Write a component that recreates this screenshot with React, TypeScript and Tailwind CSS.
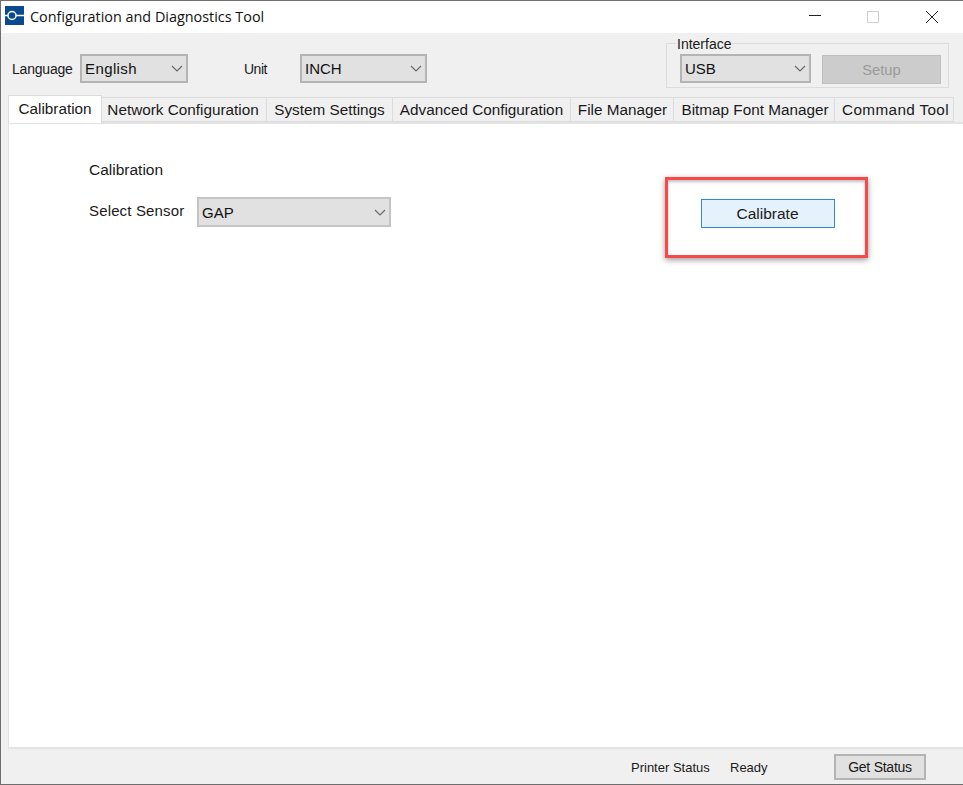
import React from "react";

const Chevron = () => (
  <svg width="12" height="7" viewBox="0 0 12 7" fill="none" className="shrink-0">
    <path d="M1 1 L6 6 L11 1" stroke="#666666" strokeWidth="1.1" />
  </svg>
);

function Select({ value, className, textClass = "" }: { value: string; className: string; textClass?: string }) {
  return (
    <div
      className={`flex h-[29px] items-center justify-between border-2 bg-[#e1e1e1] pl-[3px] pr-[2px] text-[15px] text-[#111111] ${className}`}
    >
      <span className={`pt-[2px] ${textClass}`}>{value}</span>
      <span className="mr-[1px]">
        <Chevron />
      </span>
    </div>
  );
}

const tabs: [string, string][] = [
  ["Network Configuration", "w-[165px] pr-[2px]"],
  ["System Settings", "w-[126px]"],
  ["Advanced Configuration", "w-[178px]"],
  ["File Manager", "w-[103px] pl-[1px]"],
  ["Bitmap Font Manager", "w-[161px] pl-[2px]"],
  ["Command Tool", "w-[119px] pl-[3px] tracking-[0.35px]"],
];

export default function App() {
  return (
    <div className="flex h-[785px] w-[963px] flex-col overflow-hidden border border-r-0 border-[#6e6e6e] bg-[#f0f0f0] font-['Liberation_Sans',sans-serif] text-[14px] text-[#1a1a1a]">
      {/* title bar */}
      <div className="flex h-[32px] shrink-0 items-center bg-white">
        <svg width="19" height="19" viewBox="0 0 19 19" className="mb-[3px] ml-[4px] shrink-0">
          <rect width="19" height="19" fill="#0b4a8f" />
          <circle cx="7" cy="9.5" r="4" fill="none" stroke="white" strokeWidth="1.5" />
          <path d="M0 9.5 H3 M11 9.5 H19" stroke="white" strokeWidth="1.5" />
        </svg>
        <span className="ml-[6px] font-['Open_Sans',sans-serif] text-[14.4px] text-[#111111]">
          Configuration and Diagnostics Tool
        </span>
        <div className="ml-auto flex items-center">
          <span className="mb-[3px] h-px w-[12px] bg-[#222222]" />
          <span className="ml-[46px] h-[12px] w-[12px] border border-[#cfcfcf]" />
          <svg width="12" height="12" viewBox="0 0 12 12" className="ml-[47px] mr-[25px]">
            <path d="M0 0 L12 12 M12 0 L0 12" stroke="#222222" strokeWidth="1" />
          </svg>
        </div>
      </div>

      {/* toolbar */}
      <div className="flex h-[62px] shrink-0 items-start pl-[11px]">
        <span className="mt-[26px] w-[68px] text-[14px] tracking-[-0.2px]">Language</span>
        <Select value="English" textClass="tracking-[0.4px]" className="mt-[21px] w-[108px] border-[#b4b4b4]" />
        <span className="ml-[56px] mt-[26px] w-[56px] text-[14px] tracking-[-0.5px]">Unit</span>
        <Select value="INCH" className="mt-[21px] w-[127px] border-[#b4b4b4]" />
        <div className="relative ml-[239px] mt-[10px] flex h-[45px] w-[283px] items-start border border-[#dcdcdc] pl-[13px] pt-[10px]">
          <span className="absolute -top-[7px] left-[9px] bg-[#f0f0f0] px-px text-[14px] leading-[15px]">Interface</span>
          <Select value="USB" className="w-[131px] border-[#b4b4b4]" />
          <div className="ml-[11px] mt-[1px] flex h-[29px] w-[119px] items-center justify-center border border-[#bfbfbf] bg-[#cccccc] pt-[2px] text-[14.7px] text-[#9a9a9a]">
            Setup
          </div>
        </div>
      </div>

      {/* tabs */}
      <div className="flex h-[27px] shrink-0 items-end pl-[7px]">
        <div className="relative z-10 mb-[-1px] flex h-[28px] w-[94px] items-start justify-center border border-b-0 border-[#dcdcdc] bg-white pt-[4px] text-[15.3px] leading-[17px]">
          Calibration
        </div>
        {tabs.map(([label, width]) => (
          <div
            key={label}
            className={`flex h-[25px] shrink-0 items-center justify-center border border-l-0 border-[#dcdcdc] bg-[#f0f0f0] pt-[2px] text-[15.3px] ${width}`}
          >
            {label}
          </div>
        ))}
      </div>

      {/* panel */}
      <div className="ml-[7px] flex h-[627px] shrink-0 items-start border-y-2 border-l border-[#e3e3e3] bg-white pl-[80px] text-[15px]">
        <div className="w-[302px] shrink-0 pt-[37px]">
          <div className="text-[15.5px] leading-[17px]">Calibration</div>
          <div className="mt-[19px] flex items-center">
            <span className="mb-[2px] w-[108px] tracking-[0.15px]">Select Sensor</span>
            <Select value="GAP" className="h-[30px] w-[194px] border-[#c4c4c4]" />
          </div>
        </div>
        <div className="ml-[274px] mt-[53px] flex h-[81px] w-[203px] shrink-0 items-start border-[3px] border-[#f94848] pl-[33px] pt-[19px] shadow-[0_2px_6px_rgba(0,0,0,0.4),inset_0_2px_3px_rgba(0,0,0,0.25)]">
          <div className="flex h-[29px] w-[134px] items-center justify-center border border-[#2f88d8] bg-[#e5f1fb] pr-[1px] pt-[1px] text-[15.5px]">
            Calibrate
          </div>
        </div>
      </div>

      {/* status bar */}
      <div className="flex flex-1 items-start pl-[630px] text-[13px]">
        <span className="mt-[9px] w-[99px]">Printer Status</span>
        <span className="mt-[9px] w-[104px]">Ready</span>
        <div className="mt-[5px] flex h-[26px] w-[92px] items-center justify-center border-2 border-[#b4b4b4] bg-[#e1e1e1] text-[14px] tracking-[-0.25px]">
          Get Status
        </div>
      </div>
    </div>
  );
}
